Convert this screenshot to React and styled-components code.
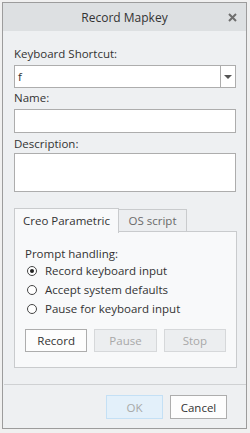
import React, { useState } from 'react';
import styled, { createGlobalStyle } from 'styled-components';

const GlobalStyle = createGlobalStyle`
	html, body {
		margin: 0;
		padding: 0;
		background: #f0f0f0;
	}
	body {
		font-family: 'Open Sans', 'Noto Sans', sans-serif;
		font-size: 11.5px;
		color: #333;
	}
`;

const Window = styled.div`
	margin: 2px 0 0 2px;
	width: 245px;
	height: 427px;
	box-sizing: border-box;
	border: 1px solid #9c9c9c;
	background: #eef0f2;
	display: flex;
	flex-direction: column;
`;

const TitleBar = styled.div`
	height: 28px;
	background: #dde0e2;
	display: flex;
	align-items: center;
	justify-content: center;
	position: relative;
	font-size: 12px;
	color: #333;
`;

const CloseButton = styled.span`
	position: absolute;
	right: 9px;
	top: 10px;
	width: 9px;
	height: 9px;
	display: flex;
`;

const Body = styled.div`
	flex: 1;
	padding: 15px 10px 0 11px;
	display: flex;
	flex-direction: column;
`;

const Label = styled.div`
	height: 16px;
	line-height: 16px;
	margin-top: ${({ top }) => top || 0}px;
	margin-bottom: ${({ gap }) => (gap === undefined ? 3 : gap)}px;
`;

const Field = styled.div`
	box-sizing: border-box;
	height: ${({ h }) => h}px;
	background: #fff;
	border: 1px solid #adadad;
	display: flex;
	align-items: center;
`;

const FieldText = styled.span`
	flex: 1;
	padding-left: 3px;
	line-height: 16px;
`;

const DropButton = styled.span`
	width: 14px;
	align-self: stretch;
	border-left: 1px solid #adadad;
	display: flex;
	align-items: center;
	justify-content: center;
`;

const Arrow = styled.span`
	width: 0;
	height: 0;
	border-left: 4px solid transparent;
	border-right: 4px solid transparent;
	border-top: 4px solid #555;
	margin-top: 1px;
`;

const Tabs = styled.div`
	margin-top: 16px;
	display: flex;
	flex-direction: column;
	margin-right: -1px;
`;

const TabRow = styled.div`
	display: flex;
	height: 24px;
	margin-bottom: -1px;
`;

const Tab = styled.div`
	box-sizing: border-box;
	width: ${({ w }) => w}px;
	height: ${({ active }) => (active ? 25 : 23)}px;
	margin-top: ${({ active }) => (active ? 0 : 1)}px;
	margin-left: ${({ active }) => (active ? 0 : -1)}px;
	border: 1px solid #c9cbcd;
	border-bottom: ${({ active }) => (active ? 'none' : '1px solid #c9cbcd')};
	background: ${({ active }) => (active ? '#f8f9fa' : '#eceef0')};
	color: ${({ active }) => (active ? '#333' : '#6a6a6a')};
	display: flex;
	align-items: center;
	justify-content: center;
	position: relative;
	z-index: ${({ active }) => (active ? 2 : 1)};
	padding-bottom: 1px;
`;

const Panel = styled.div`
	box-sizing: border-box;
	height: 137px;
	border: 1px solid #c9cbcd;
	background: #f8f9fa;
	padding: 14px 10px 0 10px;
	display: flex;
	flex-direction: column;
`;

const RadioRow = styled.label`
	display: flex;
	align-items: center;
	height: 19px;
	gap: 8px;
	padding-left: 2px;
	cursor: default;
`;

const RadioCircle = styled.span`
	box-sizing: border-box;
	width: 10px;
	height: 10px;
	border-radius: 50%;
	border: 1px solid #444;
	background: #fff;
	display: flex;
	align-items: center;
	justify-content: center;
	&::after {
		content: '';
		width: 4px;
		height: 4px;
		border-radius: 50%;
		background: ${({ checked }) => (checked ? '#222' : 'transparent')};
	}
`;

const ButtonRow = styled.div`
	display: flex;
	gap: 7px;
	margin-top: ${({ mt }) => mt || 0}px;
	justify-content: ${({ end }) => (end ? 'flex-end' : 'flex-start')};
`;

const Button = styled.button`
	box-sizing: border-box;
	width: ${({ w }) => w || 63}px;
	height: ${({ h }) => h || 23}px;
	padding: 0;
	font-family: inherit;
	font-size: 11.5px;
	border: 1px solid ${({ variant }) =>
		variant === 'disabled' ? '#d6d8da' : variant === 'default' ? '#c4e0f5' : '#adadad'};
	background: ${({ variant }) =>
		variant === 'disabled' ? '#eceef0' : variant === 'default' ? '#e3f0fa' : '#fdfdfd'};
	color: ${({ variant }) => (variant === 'disabled' || variant === 'default' ? '#a8a8a8' : '#333')};
`;

const Separator = styled.div`
	height: 1px;
	background: #cfd1d3;
	margin: 16px -10px 0 -10px;
`;

const Footer = styled.div`
	padding: 10px 9px 0 0;
`;

const options = ['Record keyboard input', 'Accept system defaults', 'Pause for keyboard input'];

export default function App() {
	const [prompt, setPrompt] = useState(0);

	return (
		<>
			<GlobalStyle />
			<Window>
				<TitleBar>
					Record Mapkey
					<CloseButton>
						<svg width="9" height="9" viewBox="0 0 9 9">
							<path d="M1 1 L8 8 M8 1 L1 8" stroke="#6e6e6e" strokeWidth="2" />
						</svg>
					</CloseButton>
				</TitleBar>
				<Body>
					<Label>Keyboard Shortcut:</Label>
					<Field h={23}>
						<FieldText>f</FieldText>
						<DropButton>
							<Arrow />
						</DropButton>
					</Field>
					<Label top={2}>Name:</Label>
					<Field h={24} />
					<Label top={3} gap={1}>Description:</Label>
					<Field h={39} />
					<Tabs>
						<TabRow>
							<Tab active w={105}>Creo Parametric</Tab>
							<Tab w={69}>OS script</Tab>
						</TabRow>
						<Panel>
							<Label gap={-1}>Prompt handling:</Label>
							{options.map((o, i) => (
								<RadioRow key={o} onClick={() => setPrompt(i)}>
									<RadioCircle checked={prompt === i} />
									{o}
								</RadioRow>
							))}
							<ButtonRow mt={11}>
								<Button>Record</Button>
								<Button variant="disabled">Pause</Button>
								<Button variant="disabled">Stop</Button>
							</ButtonRow>
						</Panel>
					</Tabs>
					<Separator />
					<Footer>
						<ButtonRow end>
							<Button variant="default" w={57} h={24}>OK</Button>
							<Button w={57} h={24}>Cancel</Button>
						</ButtonRow>
					</Footer>
				</Body>
			</Window>
		</>
	);
}
